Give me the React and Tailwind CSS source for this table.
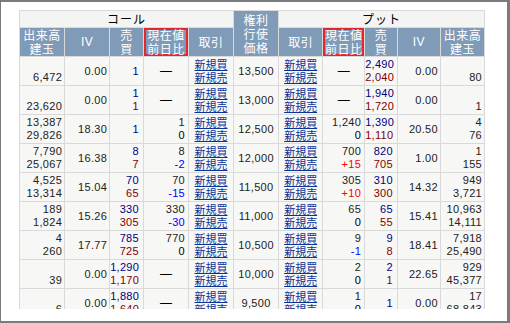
import React from "react";

const rows = [
  { cv: ["", "6,472"], civ: "0.00", cp: [["1", "b"]], cc: null, k: "13,500", pc: null, pp: [["2,490", "b"], ["2,040", "r"]], piv: "0.00", pv: ["", "80"] },
  { cv: ["", "23,620"], civ: "0.00", cp: [["1", "b"], ["1", "r"]], cc: null, k: "13,000", pc: null, pp: [["1,940", "b"], ["1,720", "r"]], piv: "0.00", pv: ["", "1"] },
  { cv: ["13,387", "29,826"], civ: "18.30", cp: [["1", "b"]], cc: ["1", "0"], k: "12,500", pc: ["1,240", "0"], pp: [["1,390", "b"], ["1,110", "r"]], piv: "20.50", pv: ["4", "76"] },
  { cv: ["7,790", "25,067"], civ: "16.38", cp: [["8", "b"], ["7", "r"]], cc: ["8", "-2"], k: "12,000", pc: ["700", "+15"], pp: [["820", "b"], ["705", "r"]], piv: "1.00", pv: ["1", "155"] },
  { cv: ["4,525", "13,314"], civ: "15.04", cp: [["70", "b"], ["65", "r"]], cc: ["70", "-15"], k: "11,500", pc: ["305", "+10"], pp: [["310", "b"], ["300", "r"]], piv: "14.32", pv: ["949", "3,721"] },
  { cv: ["189", "1,824"], civ: "15.26", cp: [["330", "b"], ["305", "r"]], cc: ["330", "-30"], k: "11,000", pc: ["65", "0"], pp: [["65", "b"], ["55", "r"]], piv: "15.41", pv: ["10,963", "14,111"] },
  { cv: ["4", "260"], civ: "17.77", cp: [["785", "b"], ["725", "r"]], cc: ["770", "0"], k: "10,500", pc: ["9", "-1"], pp: [["9", "b"], ["8", "r"]], piv: "18.41", pv: ["7,918", "25,490"] },
  { cv: ["", "39"], civ: "0.00", cp: [["1,290", "b"], ["1,170", "r"]], cc: null, k: "10,000", pc: ["2", "0"], pp: [["2", "b"], ["1", "r"]], piv: "22.65", pv: ["929", "45,377"] },
  { cv: ["", "6"], civ: "0.00", cp: [["1,880", "b"], ["1,640", "r"]], cc: null, k: "9,500", pc: ["1", "0"], pp: [["1", "b"]], piv: "0.00", pv: ["17", "68,843"] },
];

const num = { fontFamily: '"Liberation Sans", Arial, sans-serif' };
const td = "border border-[#d9d9d9] bg-[#f7f7f6] align-middle p-0 h-[29px] overflow-hidden";
const th = "border border-[#d9d9d9] bg-[#809bb8] text-white font-normal text-[12px] leading-[14px] text-center align-middle p-0 tracking-[0.5px]";
const thTop = "border border-[#d9d9d9] bg-[#f4f4f2] font-normal text-[12px] leading-[16px] text-black text-center p-0 tracking-[1px]";

function Two({ lines }) {
  return (
    <div className="flex flex-col text-right pr-[2px] leading-[13px] tracking-[0.3px]" style={num}>
      {lines.map((l, i) => (
        <span key={i}>{l === "" ? "\u00a0" : l}</span>
      ))}
    </div>
  );
}

function Price({ items }) {
  const cls = { b: "text-[#000080]", r: "text-[#800000]" };
  return (
    <div className="flex flex-col text-right pr-[4px] leading-[13px] tracking-[0.3px]" style={num}>
      {items.map(([v, c], i) => (
        <span key={i} className={cls[c]}>{v}</span>
      ))}
    </div>
  );
}

function Change({ v }) {
  if (!v)
    return (
      <div className="text-center text-black text-[12px]" style={num}>
        —
      </div>
    );
  const c = v[1].startsWith("+") ? "text-[#ff0000]" : v[1].startsWith("-") ? "text-[#0000ff]" : "text-black";
  return (
    <div className="flex flex-col text-right pr-[3px] leading-[13px] tracking-[0.3px]" style={num}>
      <span>{v[0]}</span>
      <span className={c}>{v[1]}</span>
    </div>
  );
}

function Single({ v, center }) {
  return (
    <div className={(center ? "text-center" : "text-right pr-[2px]") + " tracking-[0.3px]"} style={num}>
      {v}
    </div>
  );
}

function Links() {
  return (
    <div className="flex flex-col items-center leading-[13px] text-[11px] text-[#0a3399]">
      <span className="underline underline-offset-[1px]">新規買</span>
      <span className="underline underline-offset-[1px]">新規売</span>
    </div>
  );
}

export default function App() {
  return (
    <div
      className="w-[510px] h-[323px] bg-white border-t-2 border-l border-r-[3px] border-b-2 border-[#7b7b7b] box-border pl-[18px] pt-[8px]"
      style={{ fontFamily: '"Noto Sans CJK JP", "Liberation Sans", sans-serif' }}
    >
      <div className="h-[299px] w-[470px] overflow-hidden">
        <table className="table-fixed border-collapse w-[466px] text-[11px] text-[#222]">
          <colgroup>
            <col className="w-[44px]" />
            <col className="w-[44px]" />
            <col className="w-[33px]" />
            <col className="w-[44px]" />
            <col className="w-[44px]" />
            <col className="w-[44px]" />
            <col className="w-[43px]" />
            <col className="w-[41px]" />
            <col className="w-[32px]" />
            <col className="w-[42px]" />
            <col className="w-[43px]" />
          </colgroup>
          <thead>
            <tr>
              <th colSpan={5} className={thTop}>コール</th>
              <th rowSpan={2} className={th}>権利<br />行使<br />価格</th>
              <th colSpan={5} className={thTop}>プット</th>
            </tr>
            <tr className="h-[29px]">
              <th className={th}>出来高<br />建玉</th>
              <th className={th} style={num}>IV</th>
              <th className={th}>売<br />買</th>
              <th className={th + " shadow-[inset_0_0_0_2px_#e3262e]"}>現在値<br />前日比</th>
              <th className={th}>取引</th>
              <th className={th}>取引</th>
              <th className={th + " shadow-[inset_0_0_0_2px_#e3262e]"}>現在値<br />前日比</th>
              <th className={th}>売<br />買</th>
              <th className={th} style={num}>IV</th>
              <th className={th}>出来高<br />建玉</th>
            </tr>
          </thead>
          <tbody>
            {rows.map((r, i) => (
              <tr key={i}>
                <td className={td}><Two lines={r.cv} /></td>
                <td className={td}><Single v={r.civ} /></td>
                <td className={td}><Price items={r.cp} /></td>
                <td className={td}><Change v={r.cc} /></td>
                <td className={td}><Links /></td>
                <td className={td}><Single v={r.k} center /></td>
                <td className={td}><Links /></td>
                <td className={td}><Change v={r.pc} /></td>
                <td className={td}><Price items={r.pp} /></td>
                <td className={td}><Single v={r.piv} /></td>
                <td className={td}><Two lines={r.pv} /></td>
              </tr>
            ))}
          </tbody>
        </table>
      </div>
    </div>
  );
}
